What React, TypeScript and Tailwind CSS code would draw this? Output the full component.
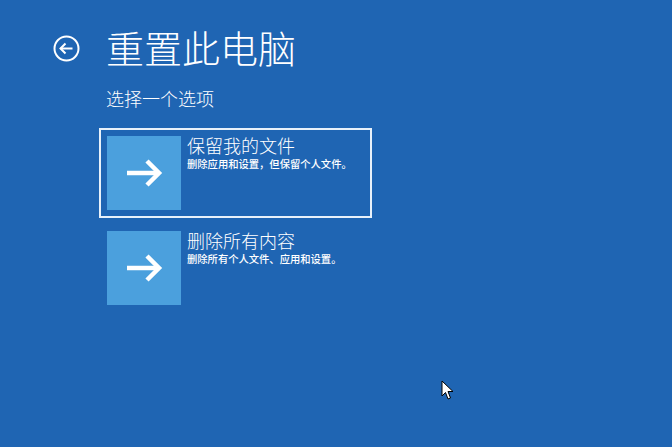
import React from "react";

const font = { fontFamily: '"Noto Sans CJK SC", "Noto Sans", sans-serif' };

function Arrow() {
  return (
    <svg width="38" height="28" viewBox="0 0 38 28" fill="none">
      <path d="M2 14 H34" stroke="white" strokeWidth="4.5" strokeLinecap="butt" />
      <path d="M22 2 L34 14 L22 26" stroke="white" strokeWidth="4.5" strokeLinejoin="miter" />
    </svg>
  );
}

function Option({ title, desc, selected }: { title: string; desc: string; selected?: boolean }) {
  return (
    <div
      className={`flex w-[273px] h-[90px] p-[6px] gap-[6px] border-2 ${
        selected ? "border-[#e8f1fa]" : "border-transparent"
      }`}
    >
      <div className="w-[74px] h-[74px] bg-[#4ba0dd] flex items-center justify-center shrink-0">
        <Arrow />
      </div>
      <div className="flex flex-col text-white">
        <div className="text-[18px] leading-[20px] font-light mt-[-1px]">{title}</div>
        <div className="text-[10.3px] leading-[12px] font-medium mt-[3px]">{desc}</div>
      </div>
    </div>
  );
}

export default function App() {
  return (
    <div className="relative w-[672px] h-[447px] bg-[#1f65b3] overflow-hidden text-white" style={font}>
      <div className="flex flex-col pl-[53px] pt-[27px]">
        <div className="flex items-center">
          <svg width="27" height="27" viewBox="0 0 27 27" fill="none" className="mt-[2px]">
            <circle cx="13.5" cy="13.5" r="12" stroke="white" strokeWidth="2" />
            <path d="M7.5 13.5 H19.5" stroke="white" strokeWidth="2" />
            <path d="M12.5 8.5 L7.5 13.5 L12.5 18.5" stroke="white" strokeWidth="2" />
          </svg>
          <div className="ml-[26px] text-[38px] leading-[40px] font-light tracking-[0px]">重置此电脑</div>
        </div>
        <div className="ml-[53px] mt-[21px] text-[18px] leading-[20px] font-light">选择一个选项</div>
        <div className="ml-[46px] mt-[20px] flex flex-col gap-[5px]">
          <Option title="保留我的文件" desc="删除应用和设置，但保留个人文件。" selected />
          <Option title="删除所有内容" desc="删除所有个人文件、应用和设置。" />
        </div>
      </div>
      <svg className="absolute left-[441px] top-[380px]" width="14" height="21" viewBox="0 0 14 21">
        <path d="M1 1 L1 16 L4.5 12.5 L7 19 L9.5 18 L7 11.5 L12 11.5 Z" fill="white" stroke="black" strokeWidth="1" strokeLinejoin="round" />
      </svg>
    </div>
  );
}
